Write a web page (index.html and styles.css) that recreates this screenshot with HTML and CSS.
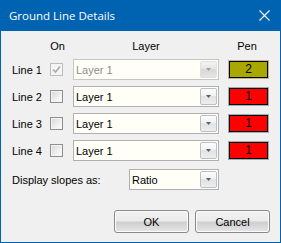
FILE: index.html
```html
<!DOCTYPE html>
<html>
<head>
<meta charset="utf-8">
<link rel="stylesheet" href="styles.css">
</head>
<body>
<div class="window">
  <div class="titlebar">
    <span class="title">Ground Line Details</span>
    <svg class="close" width="11" height="11" viewBox="0 0 11 11"><path d="M0.5 0.5L10.5 10.5M10.5 0.5L0.5 10.5" stroke="#fff" stroke-width="1.1" fill="none"/></svg>
  </div>
  <div class="content">
    <div class="grid">
      <div></div>
      <div class="hdr hdr-on">On</div>
      <div class="hdr hdr-layer">Layer</div>
      <div class="hdr hdr-pen">Pen</div>

      <div class="lbl">Line 1</div>
      <div class="chk disabled"><svg width="9" height="9" viewBox="0 0 9 9"><path d="M1 4.5L3.5 7L8 1.5" stroke="#a9a9a9" stroke-width="1.6" fill="none"/></svg></div>
      <div class="combo disabled"><span class="val">Layer 1</span><span class="dd"><svg width="5" height="3" viewBox="0 0 5 3"><path d="M0 0H5L2.5 3Z" fill="#a0a0a0"/></svg></span></div>
      <div class="pen olive">2</div>

      <div class="lbl">Line 2</div>
      <div class="chk"></div>
      <div class="combo"><span class="val">Layer 1</span><span class="dd"><svg width="5" height="3" viewBox="0 0 5 3"><path d="M0 0H5L2.5 3Z" fill="#56606c"/></svg></span></div>
      <div class="pen red">1</div>

      <div class="lbl">Line 3</div>
      <div class="chk"></div>
      <div class="combo"><span class="val">Layer 1</span><span class="dd"><svg width="5" height="3" viewBox="0 0 5 3"><path d="M0 0H5L2.5 3Z" fill="#56606c"/></svg></span></div>
      <div class="pen red">1</div>

      <div class="lbl">Line 4</div>
      <div class="chk"></div>
      <div class="combo"><span class="val">Layer 1</span><span class="dd"><svg width="5" height="3" viewBox="0 0 5 3"><path d="M0 0H5L2.5 3Z" fill="#56606c"/></svg></span></div>
      <div class="pen red">1</div>
    </div>

    <div class="slopes">
      <span class="slopes-lbl">Display slopes as:</span>
      <div class="combo ratio"><span class="val">Ratio</span><span class="dd"><svg width="5" height="3" viewBox="0 0 5 3"><path d="M0 0H5L2.5 3Z" fill="#56606c"/></svg></span></div>
    </div>

    <div class="buttons">
      <div class="btn">OK</div>
      <div class="btn">Cancel</div>
    </div>
  </div>
</div>
</body>
</html>
```

FILE: styles.css
```css
html, body {
  margin: 0;
  padding: 0;
}
body {
  width: 281px;
  height: 243px;
  background: #ffffff;
  font-family: "Liberation Sans", Arial, sans-serif;
  font-size: 11px;
  color: #000;
}
.window {
  width: 281px;
  height: 243px;
  box-sizing: border-box;
  border: 1px solid #0063b1;
  border-top: 0;
  background: #f0f0f0;
  display: flex;
  flex-direction: column;
}
.titlebar {
  height: 31px;
  flex: none;
  background: #0063b1;
  display: flex;
  align-items: center;
  padding-left: 8px;
  color: #ffffff;
}
.title {
  font-family: "Open Sans", "Noto Sans", sans-serif;
  font-size: 11.5px;
  margin-top: -1px;
}
.close {
  margin-left: auto;
  margin-right: 10px;
}
.content {
  padding: 9px 10px 0 11px;
  display: flex;
  flex-direction: column;
}
.grid {
  display: grid;
  grid-template-columns: 38px 23px 155px 41px;
  grid-template-rows: 13px repeat(4, 21px);
  row-gap: 6px;
  align-items: center;
}
.hdr {
  line-height: 13px;
}
.hdr-on {
  width: 15px;
  text-align: center;
}
.hdr-layer {
  width: 146px;
  text-align: center;
}
.hdr-pen {
  width: 38px;
  text-align: center;
}
.lbl {
  white-space: nowrap;
}
.chk {
  width: 13px;
  height: 13px;
  box-sizing: border-box;
  border: 1px solid #8e8f8f;
  background: linear-gradient(135deg, #d6d6d6, #f0f0f0 60%, #ffffff);
  box-shadow: inset 0 0 0 1px #f4f4f4;
  display: flex;
  align-items: center;
  justify-content: center;
}
.chk.disabled {
  border-color: #bcbcbc;
  background: #f4f4f4;
}
.combo {
  box-sizing: border-box;
  width: 146px;
  height: 21px;
  border: 1px solid #b0b0b0;
  background: #fffff7;
  display: flex;
  align-items: center;
  padding-left: 2px;
  padding-right: 1px;
}
.combo .val {
  flex: 1;
  white-space: nowrap;
}
.combo.disabled {
  border-color: #c6c6c6;
}
.combo.disabled .val {
  color: #8d8d8d;
}
.dd {
  width: 17px;
  height: 17px;
  box-sizing: border-box;
  border: 1px solid #b8c0c9;
  border-radius: 2px;
  background: linear-gradient(#fcfcfc, #f1f1f1 45%, #e2e2e2 50%, #eeeeee);
  display: flex;
  align-items: center;
  justify-content: center;
}
.combo.disabled .dd {
  border-color: #e0e0e0;
  background: linear-gradient(#f2f2f2, #e6e6e6 45%, #d8d8d8 50%, #e4e4e4);
}
.pen {
  box-sizing: border-box;
  width: 41px;
  height: 19px;
  border: 1px solid #a2aab2;
  box-shadow: inset 0 0 0 1px #000000;
  text-align: center;
  font-size: 12px;
  line-height: 17px;
}
.pen.olive {
  background: #a8a800;
  border-color: #c6b48c;
}
.pen.red {
  background: #ff0000;
}
.slopes {
  margin-top: 8px;
  height: 21px;
  display: flex;
  align-items: center;
}
.slopes-lbl {
  width: 117px;
  flex: none;
  white-space: nowrap;
}
.combo.ratio {
  width: 90px;
}
.buttons {
  margin-top: 20px;
  display: flex;
  justify-content: flex-end;
  gap: 6px;
}
.btn {
  box-sizing: border-box;
  width: 75px;
  height: 23px;
  border: 1px solid #8a8a8a;
  border-radius: 3px;
  background: linear-gradient(#f2f2f2, #ebebeb 45%, #dddddd 50%, #cfcfcf 55%, #e6e6e6);
  box-shadow: inset 0 0 0 1px #fbfbfb;
  display: flex;
  align-items: center;
  justify-content: center;
}
```
